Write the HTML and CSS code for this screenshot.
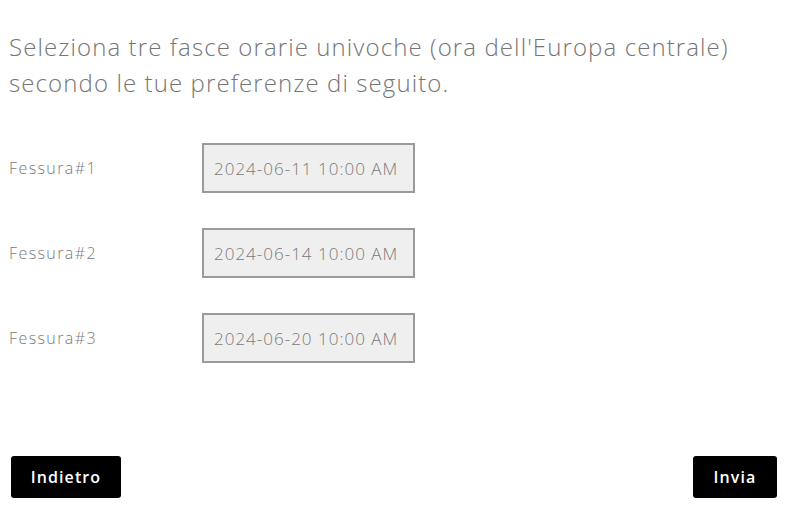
FILE: index.html
```html
<!DOCTYPE html>
<html lang="it">
<head>
<meta charset="utf-8">
<title>Fasce orarie</title>
<link rel="stylesheet" href="styles.css">
</head>
<body>
<main class="page">
  <p class="intro">Seleziona tre fasce orarie univoche (ora dell'Europa centrale) secondo le tue preferenze di seguito.</p>
  <div class="slots">
    <div class="slot">
      <label class="slot-label" for="s1">Fessura#1</label>
      <input class="slot-input" id="s1" type="text" value="2024-06-11 10:00 AM" readonly>
    </div>
    <div class="slot">
      <label class="slot-label" for="s2">Fessura#2</label>
      <input class="slot-input" id="s2" type="text" value="2024-06-14 10:00 AM" readonly>
    </div>
    <div class="slot">
      <label class="slot-label" for="s3">Fessura#3</label>
      <input class="slot-input" id="s3" type="text" value="2024-06-20 10:00 AM" readonly>
    </div>
  </div>
  <div class="actions">
    <button class="btn btn-back" type="button">Indietro</button>
    <button class="btn btn-send" type="button">Invia</button>
  </div>
</main>
</body>
</html>
```
FILE: styles.css
```css
* { box-sizing: border-box; }
html, body { margin: 0; padding: 0; background: #fff; }
body {
  font-family: "Open Sans", "Liberation Sans", sans-serif;
  font-weight: 300;
  color: #777;
}
.page {
  width: 812px;
  height: 526px;
  padding: 29px 35px 0 9px;
}
.intro {
  margin: 0;
  font-size: 24px;
  line-height: 36px;
  letter-spacing: 1.1px;
  color: #757575;
  max-width: 760px;
}
.slots {
  margin-top: 42px;
  display: flex;
  flex-direction: column;
  gap: 35px;
}
.slot {
  display: flex;
  align-items: center;
  height: 50px;
}
.slot-label {
  width: 193px;
  font-size: 16px;
  letter-spacing: 1.4px;
  color: #7a7a7a;
}
.slot-input {
  width: 213px;
  height: 50px;
  border: 2px solid #9a9a9a;
  background: #efefef;
  padding: 0 10px;
  font-family: inherit;
  font-weight: 300;
  font-size: 17px;
  letter-spacing: 1px;
  color: #7a7a7a;
  outline: none;
}
.actions {
  margin-top: 93px;
  padding-left: 2px;
  display: flex;
  justify-content: space-between;
}
.btn {
  height: 42px;
  border: none;
  border-radius: 3px;
  background: #000;
  color: #fff;
  font-family: inherit;
  font-weight: 600;
  font-size: 16px;
  letter-spacing: 1.1px;
  cursor: pointer;
}
.btn-back { width: 110px; }
.btn-send { width: 84px; }
```
